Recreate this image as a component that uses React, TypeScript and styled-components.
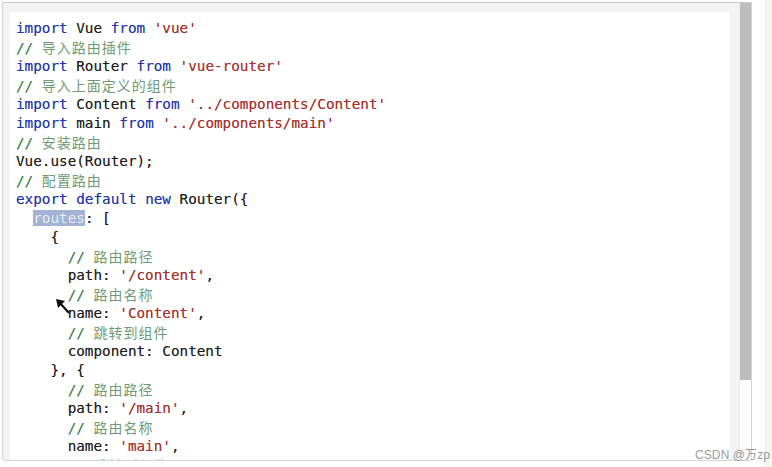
import React from 'react';
import styled, { createGlobalStyle } from 'styled-components';

const GlobalStyle = createGlobalStyle`
  html, body {
    margin: 0;
    padding: 0;
    background: #ffffff;
  }
`;

const Page = styled.div`
  display: flex;
  height: 467px;
  width: 772px;
  overflow: hidden;
  position: relative;
`;

const Frame = styled.div`
  display: flex;
  width: 750px;
  height: 459px;
  margin: 2px 0 0 2px;
  box-sizing: border-box;
  border: 1px solid #d4d4d4;
  border-top-color: #c9c9c9;
  border-radius: 0 0 4px 4px;
  background: #f3f3f3;
  overflow: hidden;
`;

const Well = styled.div`
  flex: 1;
  display: flex;
  padding: 9px 9px 0 7px;
`;

const Panel = styled.div`
  position: relative;
  flex: 1;
  background: #ffffff;
  border-radius: 3px 3px 0 0;
  padding: 7px 0 0 6px;
  overflow: hidden;
`;

const Scrollbar = styled.div`
  width: 11px;
  display: flex;
  flex-direction: column;
  background: #fbfbfb;
  border-left: 1px solid #ececec;
`;

const Thumb = styled.div`
  height: 377px;
  background: #bdbdbd;
`;

const Gutter = styled.div`
  width: 13px;
`;

const Strip = styled.div`
  flex: 1;
  background: #f6f4ef;
  border-left: 1px solid #eeebe4;
`;

const Line = styled.div`
  height: 19px;
  line-height: 19px;
  white-space: pre;
  font-family: "DejaVu Sans Mono", "Liberation Mono", monospace;
  font-size: 14.3px;
  color: #1c1c1c;
  text-shadow: 0 0 0.6px rgba(0, 0, 0, 0.45);
`;

const Keyword = styled.span`
  color: #2236b5;
`;

const Str = styled.span`
  color: #b02e2a;
`;

const Slash = styled.span`
  color: #3f8a4f;
`;

const Hanzi = styled.span`
  color: #6e9b73;
  font-family: "Noto Sans CJK SC", sans-serif;
  font-size: 14px;
  letter-spacing: 1px;
  text-shadow: none;
`;

const Mark = styled.span`
  background: #a3b3d6;
  color: #f5f7fc;
`;

const Pointer = styled.svg`
  position: absolute;
  left: 46px;
  top: 287px;
`;

const Watermark = styled.div`
  position: absolute;
  left: 695px;
  top: 445px;
  font-family: "Liberation Sans", Arial, "Noto Sans CJK SC", sans-serif;
  font-size: 12px;
  color: #9a9a9a;
  letter-spacing: 0.1px;
`;

type Tok = ['k' | 's' | 'c' | 'p' | 'h', string];

const lines: Tok[][] = [
  [['k', 'import'], ['p', ' Vue '], ['k', 'from'], ['p', ' '], ['s', "'vue'"]],
  [['c', '导入路由插件']],
  [['k', 'import'], ['p', ' Router '], ['k', 'from'], ['p', ' '], ['s', "'vue-router'"]],
  [['c', '导入上面定义的组件']],
  [['k', 'import'], ['p', ' Content '], ['k', 'from'], ['p', ' '], ['s', "'../components/Content'"]],
  [['k', 'import'], ['p', ' main '], ['k', 'from'], ['p', ' '], ['s', "'../components/main'"]],
  [['c', '安装路由']],
  [['p', 'Vue.use(Router);']],
  [['c', '配置路由']],
  [['k', 'export'], ['p', ' '], ['k', 'default'], ['p', ' '], ['k', 'new'], ['p', ' Router({']],
  [['p', '  '], ['h', 'routes'], ['p', ': [']],
  [['p', '    {']],
  [['p', '      '], ['c', '路由路径']],
  [['p', '      path: '], ['s', "'/content'"], ['p', ',']],
  [['p', '      '], ['c', '路由名称']],
  [['p', '      name: '], ['s', "'Content'"], ['p', ',']],
  [['p', '      '], ['c', '跳转到组件']],
  [['p', '      component: Content']],
  [['p', '    }, {']],
  [['p', '      '], ['c', '路由路径']],
  [['p', '      path: '], ['s', "'/main'"], ['p', ',']],
  [['p', '      '], ['c', '路由名称']],
  [['p', '      name: '], ['s', "'main'"], ['p', ',']],
  [['p', '      '], ['c', '跳转到组件']],
];

const renderTok = ([kind, text]: Tok, i: number) => {
  switch (kind) {
    case 'k':
      return <Keyword key={i}>{text}</Keyword>;
    case 's':
      return <Str key={i}>{text}</Str>;
    case 'h':
      return <Mark key={i}>{text}</Mark>;
    case 'c':
      return (
        <React.Fragment key={i}>
          <Slash>// </Slash>
          <Hanzi>{text}</Hanzi>
        </React.Fragment>
      );
    default:
      return <React.Fragment key={i}>{text}</React.Fragment>;
  }
};

const App: React.FC = () => {
  return (
    <>
      <GlobalStyle />
      <Page>
        <Frame>
          <Well>
            <Panel>
              {lines.map((toks, n) => (
                <Line key={n}>{toks.map(renderTok)}</Line>
              ))}
              <Pointer width="15" height="16" viewBox="0 0 15 16">
                <polygon points="0,0 9,2 2,9" fill="#111" />
                <line x1="3" y1="3" x2="13" y2="14" stroke="#111" strokeWidth="2.2" />
              </Pointer>
            </Panel>
          </Well>
          <Scrollbar>
            <Thumb />
          </Scrollbar>
        </Frame>
        <Gutter />
        <Strip />
        <Watermark>CSDN @万zp</Watermark>
      </Page>
    </>
  );
};

export default App;
